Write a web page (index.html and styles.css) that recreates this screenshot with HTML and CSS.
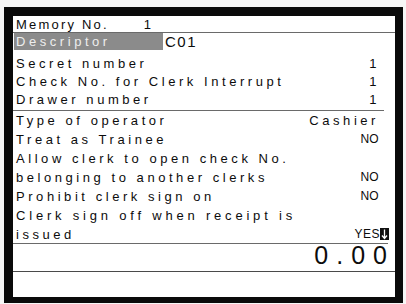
FILE: index.html
```html
<!DOCTYPE html>
<html>
<head>
<meta charset="utf-8">
<link rel="stylesheet" href="styles.css">
</head>
<body>
<div class="frame">
  <div class="screen">
    <div class="memory"><span class="mem-label">Memory No.</span><span class="mem-num">1</span></div>
    <div class="desc"><span class="desc-bar">Descriptor</span><span class="desc-val">C01</span></div>
    <div class="group1">
      <div class="row"><span>Secret number</span><span class="num">1</span></div>
      <div class="row"><span>Check No. for Clerk Interrupt</span><span class="num">1</span></div>
      <div class="row"><span>Drawer number</span><span class="num">1</span></div>
    </div>
    <div class="group2">
      <div class="row r19"><span>Type of operator</span><span>Cashier</span></div>
      <div class="row r19"><span>Treat as Trainee</span><span class="yn">NO</span></div>
      <div class="row r19"><span>Allow clerk to open check No.</span></div>
      <div class="row r19"><span>belonging to another clerks</span><span class="yn">NO</span></div>
      <div class="row r19"><span>Prohibit clerk sign on</span><span class="yn">NO</span></div>
      <div class="row r19"><span class="wide">Clerk sign off when receipt is</span></div>
      <div class="row r19 last"><span>issued</span><span class="yes"><span class="yn yes-text">YES</span><svg class="cursor" width="9" height="12" viewBox="0 0 9 12"><rect width="9" height="12" fill="#111"/><path d="M4.5 1.5 V10 M2 7.5 L4.5 10.5 L7 7.5" stroke="#fff" stroke-width="1.3" fill="none"/></svg></span></div>
    </div>
    <div class="amount">0.00</div>
    <div class="blank"></div>
  </div>
</div>
</body>
</html>
```
FILE: styles.css
```css
html, body {
  margin: 0;
  padding: 0;
}
body {
  background: #f6f6f6;
  width: 406px;
  height: 304px;
  overflow: hidden;
  font-family: "Liberation Sans", Arial, sans-serif;
  color: #0c0c0c;
}
.frame {
  margin: 7px 0 0 4px;
  width: 382px;
  height: 281px;
  border-style: solid;
  border-color: #0a0a0a;
  border-width: 9px 8px 6px 9px;
  background: #fff;
}
.screen {
  display: flex;
  flex-direction: column;
  height: 281px;
  font-size: 13px;
  letter-spacing: 3.55px;
}
.memory {
  height: 16px;
  line-height: 17px;
  border-bottom: 1px solid #6a6a6a;
  padding-left: 3px;
  display: flex;
  letter-spacing: 2.2px;
}
.mem-num {
  margin-left: 35px;
}
.desc {
  height: 17px;
  display: flex;
  align-items: stretch;
  padding-left: 1px;
}
.desc-bar {
  background: #8b8b8b;
  color: #eeeeee;
  padding-left: 2px;
  line-height: 18px;
  flex: 0 0 147px;
}
.desc-val {
  font-size: 15px;
  letter-spacing: 1.5px;
  line-height: 18px;
  margin-left: 2px;
}
.group1 {
  padding-top: 5px;
  padding-bottom: 1px;
  border-bottom: 1px solid #6a6a6a;
  margin-right: 11px;
}
.row {
  display: flex;
  justify-content: space-between;
  height: 18px;
  line-height: 18px;
  padding: 0 4px 0 3px;
  white-space: nowrap;
}
.group1 .row {
  padding-right: 4px;
}
.group2 {
  border-bottom: 1px solid #6a6a6a;
  margin-right: 7px;
}
.group2 .row {
  padding-right: 9px;
}
.r19 {
  height: 19px;
  line-height: 19px;
}
.r19.last {
  height: 18px;
}
.wide {
  letter-spacing: 3.8px;
}
.yn {
  font-size: 12px;
  letter-spacing: 0.3px;
}
.yes {
  display: flex;
  align-items: flex-end;
  margin-right: -10px;
}
.yes-text {
  line-height: 12px;
  letter-spacing: 0.5px;
  margin-bottom: 3px;
}
.cursor {
  display: block;
  margin-bottom: 3px;
}
.amount {
  height: 26px;
  padding-top: 1px;
  line-height: 20px;
  font-size: 25px;
  letter-spacing: 8px;
  text-align: right;
  border-bottom: 1px solid #4a4a4a;
}
.blank {
  flex: 1;
}
```
